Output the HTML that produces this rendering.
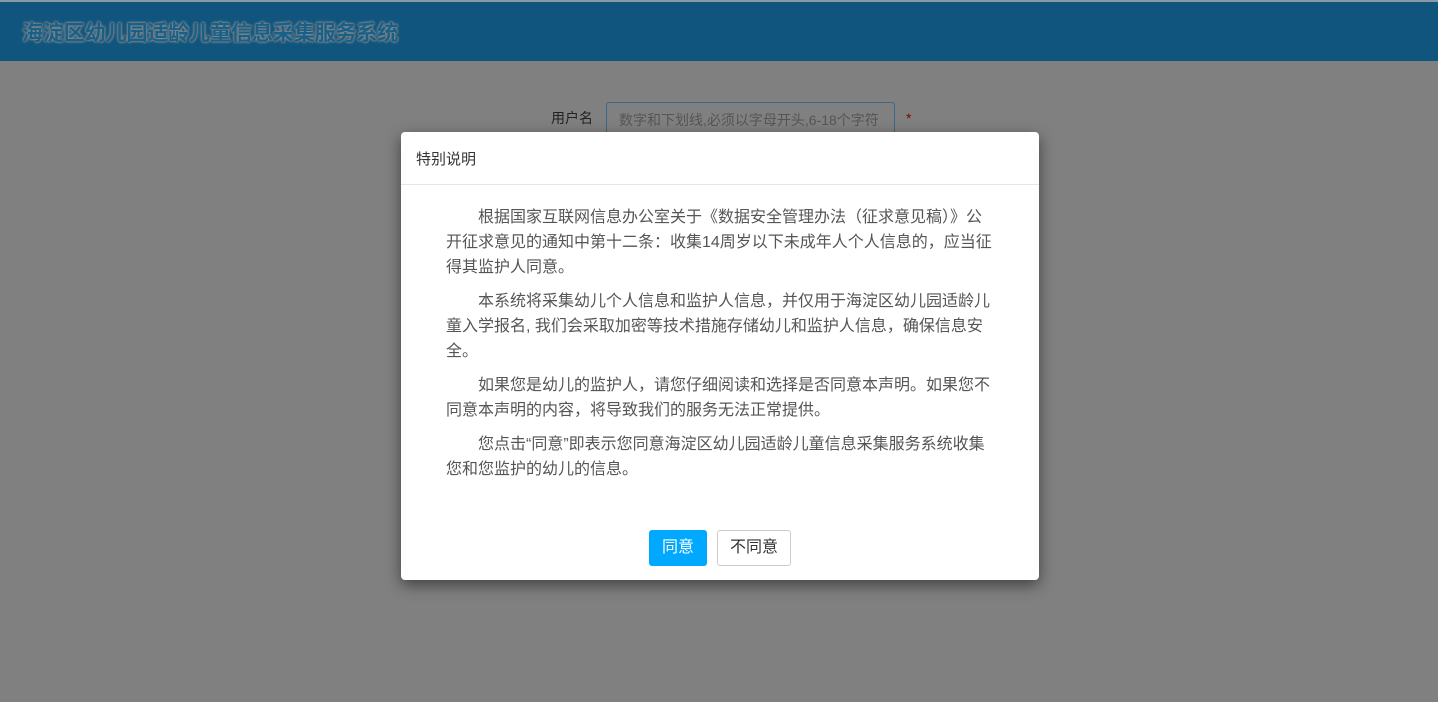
<!DOCTYPE html>
<html><head><meta charset="utf-8"><style>
*{margin:0;padding:0;box-sizing:border-box}
body{width:1438px;height:702px;overflow:hidden;background:#808080;font-family:"Liberation Sans","Noto Sans CJK SC",sans-serif;position:relative}
.hdr{position:absolute;left:0;top:0;width:1438px;height:61px;background:#0f557e;border-top:2px solid #8a9aa5}
.hdr h1{position:absolute;left:22px;top:15px;font-size:21px;font-weight:bold;color:#17608a;text-shadow:0 0 2px #888,0 0 2px #888,0 0 3px #888;letter-spacing:-0.1px;white-space:nowrap}
.lbl{position:absolute;left:551px;top:108px;font-size:14px;color:#222}
.inp{position:absolute;left:606px;top:102px;width:289px;height:34px;border:1px solid #3a6a8a;border-radius:3px;font-size:14px;color:#555;padding:7px 12px;white-space:nowrap}
.star{position:absolute;left:906px;top:110px;color:#800;font-size:14px}
.modal{position:absolute;left:401px;top:132px;width:638px;height:448px;background:#fff;border-radius:4px;box-shadow:0 5px 15px rgba(0,0,0,.5)}
.mh{height:53px;border-bottom:1px solid #e5e5e5;padding:16px 15px;font-size:15px;color:#333}
.mb{padding:20px 0 0 45px;font-size:16px;line-height:25px;color:#555;white-space:nowrap}
.mb p{margin-bottom:9px}
.b1{position:absolute;left:248px;top:398px;width:58px;height:36px;background:#00a8ff;color:#fff;border-radius:3px;font-size:16px;text-align:center;line-height:36px}
.b2{position:absolute;left:316px;top:398px;width:74px;height:36px;border:1px solid #ccc;color:#333;border-radius:3px;font-size:16px;text-align:center;line-height:34px}
</style></head><body>
<div class="hdr"><h1>海淀区幼儿园适龄儿童信息采集服务系统</h1></div>
<div class="lbl">用户名</div>
<div class="inp">数字和下划线,必须以字母开头,6-18个字符</div>
<div class="star">*</div>
<div class="modal">
<div class="mh">特别说明</div>
<div class="mb">
<p>　　根据国家互联网信息办公室关于《数据安全管理办法（征求意见稿）》公<br>开征求意见的通知中第十二条：收集14周岁以下未成年人个人信息的，应当征<br>得其监护人同意。</p>
<p>　　本系统将采集幼儿个人信息和监护人信息，并仅用于海淀区幼儿园适龄儿<br>童入学报名, 我们会采取加密等技术措施存储幼儿和监护人信息，确保信息安<br>全。</p>
<p>　　如果您是幼儿的监护人，请您仔细阅读和选择是否同意本声明。如果您不<br>同意本声明的内容，将导致我们的服务无法正常提供。</p>
<p>　　您点击“同意”即表示您同意海淀区幼儿园适龄儿童信息采集服务系统收集<br>您和您监护的幼儿的信息。</p>
</div>
<div class="b1">同意</div>
<div class="b2">不同意</div>
</div>
</body></html>
